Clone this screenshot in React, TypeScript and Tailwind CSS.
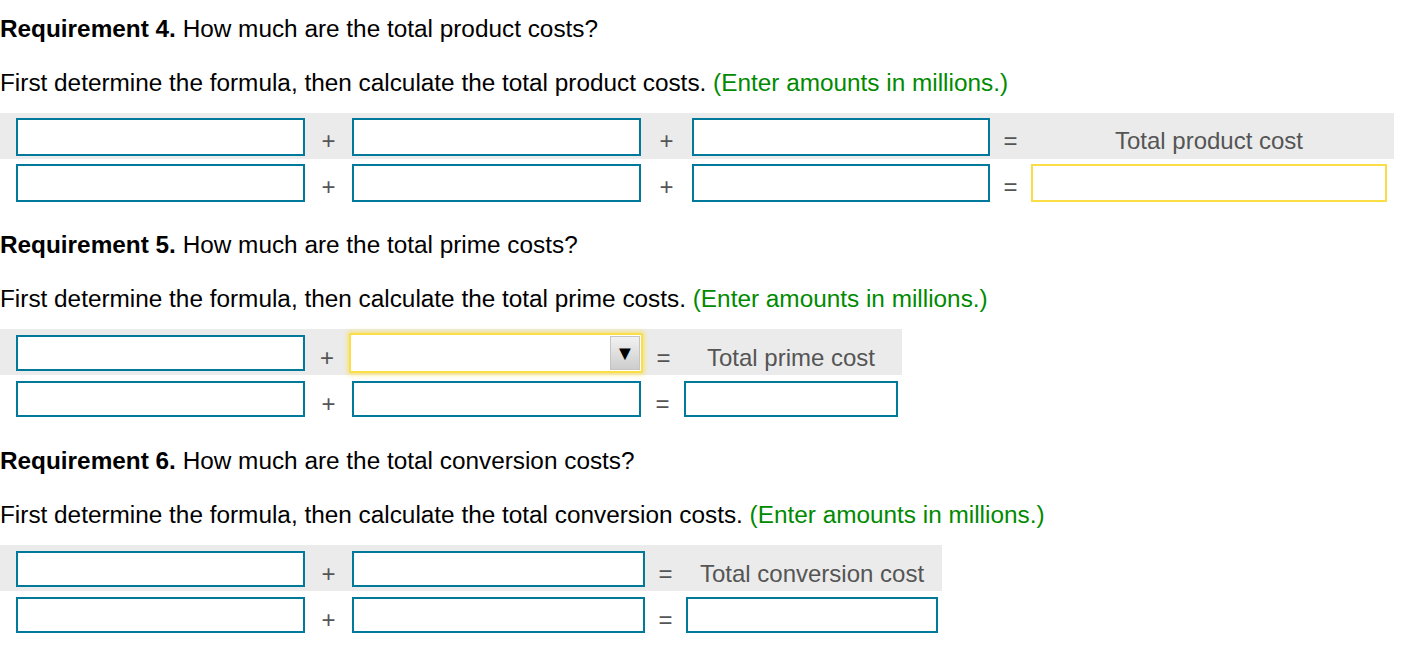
const box = "border-2 border-[#00799a] bg-white";

function Op({ children, w }: { children: string; w: string }) {
  return <div className={`${w} flex shrink-0 justify-center pt-[9px] text-[24px] leading-[28px] text-[#555]`}>{children}</div>;
}

function Heading({ num, question, sub }: { num: number; question: string; sub: string }) {
  return (
    <>
      <p className="h-[28px] leading-[28px]">
        <span className="font-bold">Requirement {num}.</span> {question}
      </p>
      <p className="mt-[26px] h-[28px] leading-[28px]">
        {sub} <span className="text-[#008a00]">(Enter amounts in millions.)</span>
      </p>
    </>
  );
}

function Label({ w, children }: { w: string; children: string }) {
  return <div className={`${w} pt-[9px] text-center text-[24px] leading-[28px] text-[#555]`}>{children}</div>;
}

export default function App() {
  return (
    <div className="min-h-[645px] bg-white pt-[15px] text-[24.35px] text-black [font-family:'Liberation_Sans',Arial,sans-serif]">
      <Heading
        num={4}
        question="How much are the total product costs?"
        sub="First determine the formula, then calculate the total product costs."
      />
      <div className="mt-[16px] w-[1394px]">
        <div className="flex h-[46px] items-start bg-[#ebebeb] pl-[16px] pt-[5px]">
          <div className={`${box} h-[38px] w-[289px]`} />
          <Op w="w-[47px]">+</Op>
          <div className={`${box} h-[38px] w-[289px]`} />
          <Op w="w-[51px]">+</Op>
          <div className={`${box} h-[38px] w-[298px]`} />
          <Op w="w-[41px]">=</Op>
          <Label w="w-[356px]">Total product cost</Label>
        </div>
        <div className="flex h-[47px] items-start pl-[16px] pt-[5px]">
          <div className={`${box} h-[38px] w-[289px]`} />
          <Op w="w-[47px]">+</Op>
          <div className={`${box} h-[38px] w-[289px]`} />
          <Op w="w-[51px]">+</Op>
          <div className={`${box} h-[38px] w-[298px]`} />
          <Op w="w-[41px]">=</Op>
          <div className="h-[38px] w-[356px] border-2 border-[#fbdd45] bg-white" />
        </div>
      </div>

      <div className="mt-[25px]">
        <Heading
          num={5}
          question="How much are the total prime costs?"
          sub="First determine the formula, then calculate the total prime costs."
        />
      </div>
      <div className="mt-[16px] w-[902px]">
        <div className="flex h-[46px] items-start bg-[#ebebeb] pl-[16px] pt-[6px]">
          <div className={`${box} h-[36px] w-[289px]`} />
          <Op w="w-[44px]">+</Op>
          <div className="-mt-[2px] flex h-[40px] w-[294px] items-center rounded-[2px] border-2 border-[#fbdd45] bg-white pr-[1px] shadow-[0_0_4px_2px_rgba(251,221,69,0.6)]">
            <div className="flex-1" />
            <div className="flex h-[34px] w-[30px] items-center justify-center border border-[#c4c4c4] bg-gradient-to-b from-[#f2f2f2] to-[#cdcdcd] text-[20px] leading-none text-black">
              ▼
            </div>
          </div>
          <Op w="w-[41px]">=</Op>
          <Label w="w-[214px]">Total prime cost</Label>
        </div>
        <div className="flex h-[47px] items-start pl-[16px] pt-[6px]">
          <div className={`${box} h-[36px] w-[289px]`} />
          <Op w="w-[47px]">+</Op>
          <div className={`${box} h-[36px] w-[289px]`} />
          <Op w="w-[43px]">=</Op>
          <div className={`${box} h-[36px] w-[214px]`} />
        </div>
      </div>

      <div className="mt-[25px]">
        <Heading
          num={6}
          question="How much are the total conversion costs?"
          sub="First determine the formula, then calculate the total conversion costs."
        />
      </div>
      <div className="mt-[16px] w-[942px]">
        <div className="flex h-[46px] items-start bg-[#ebebeb] pl-[16px] pt-[6px]">
          <div className={`${box} h-[36px] w-[289px]`} />
          <Op w="w-[47px]">+</Op>
          <div className={`${box} h-[36px] w-[293px]`} />
          <Op w="w-[41px]">=</Op>
          <Label w="w-[252px]">Total conversion cost</Label>
        </div>
        <div className="flex h-[47px] items-start pl-[16px] pt-[6px]">
          <div className={`${box} h-[36px] w-[289px]`} />
          <Op w="w-[47px]">+</Op>
          <div className={`${box} h-[36px] w-[293px]`} />
          <Op w="w-[41px]">=</Op>
          <div className={`${box} h-[36px] w-[252px]`} />
        </div>
      </div>
    </div>
  );
}
